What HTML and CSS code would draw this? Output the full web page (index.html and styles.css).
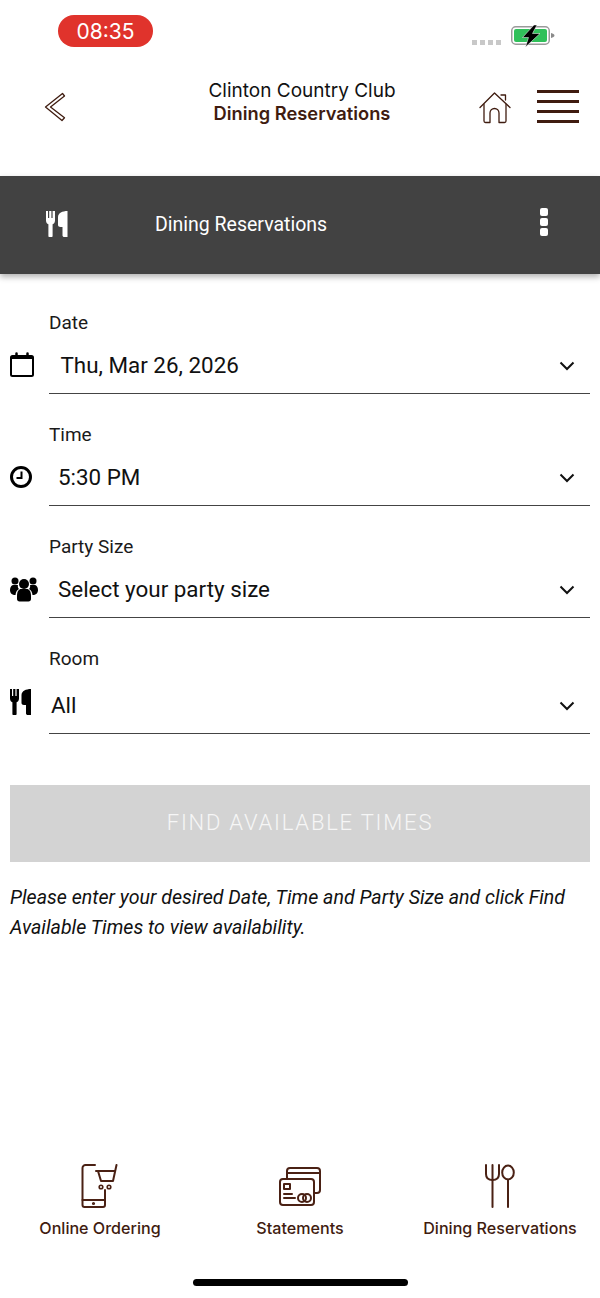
FILE: index.html
```html
<!DOCTYPE html>
<html lang="en">
<head>
<meta charset="utf-8">
<title>Dining Reservations</title>
<link rel="stylesheet" href="styles.css">
</head>
<body>
<div class="app">
  <div class="status">
    <div class="time">08:35</div>
    <div class="status-right">
      <div class="signal"><i></i><i></i><i></i><i></i></div>
      <svg class="battery" width="46" height="22" viewBox="0 0 46 22">
        <rect x="1.750" y="1.750" width="37.500" height="17.500" rx="4" fill="#fff" stroke="#9a9a9a" stroke-width="1.500"/>
        <rect x="4" y="4" width="33" height="13" rx="2" fill="#30c05a"/>
        <path d="M41 8v5c2-.5 3.500-1.500 3.500-2.500S43 8.500 41 8z" fill="#8a8a8a"/>
        <path d="M24 0 12.500 12.500h6L15.500 22 30 8.500h-7.500L27 0z" fill="#000" stroke="#fff" stroke-width=".5"/>
      </svg>
    </div>
  </div>

  <header class="header">
    <svg class="back" width="22" height="30" viewBox="0 0 22 30">
      <path d="M18.500 1.500 1.500 15l0 0 16.500 13.500 2.500-2.700L6.500 15 20.500 4z" fill="none" stroke="#3f1c10" stroke-width="1.300" stroke-linejoin="round"/>
    </svg>
    <div class="titles">
      <div class="club">Clinton Country Club</div>
      <div class="page">Dining Reservations</div>
    </div>
    <svg class="home" width="32" height="32" viewBox="0 0 32 32" fill="none" stroke="#3f1c10" stroke-width="1.300" stroke-linecap="round" stroke-linejoin="round">
      <path d="M1 15.500 15.500 1 31 15.500"/>
      <path d="M5 12.500V29a1.500 1.500 0 0 0 1.500 1.500H11V21a4.500 4.500 0 0 1 9 0v9.500h5.500A1.500 1.500 0 0 0 27 29V12.500"/>
      <path d="M22 3h4.500v5"/>
    </svg>
    <div class="burger"><i></i><i></i><i></i><i></i></div>
  </header>

  <div class="toolbar">
    <svg class="tool-icon" width="22" height="26" viewBox="0 0 22 26">
      <path d="M0 0h2v7h1.200V0h2.200v7h1.200V0H9v9.500c0 2-1 3.300-2.400 3.800V25c0 .6-.4 1-1 1H3.400c-.6 0-1-.4-1-1V13.300C1 12.800 0 11.500 0 9.500z" fill="#fff"/>
      <path d="M21.500 0v26h-3.200c-1 0-1.800-.6-1.800-1.500V16h-2c-1.500 0-2.500-.8-2.500-2V6c0-4 4.500-6 9.500-6z" fill="#fff"/>
    </svg>
    <div class="tool-title">Dining Reservations</div>
    <div class="kebab"><i></i><i></i><i></i></div>
  </div>

  <main class="form">
    <div class="field">
      <svg class="field-icon cal" width="24" height="25" viewBox="0 0 24 25" fill="none" stroke="#000" stroke-width="2">
        <rect x="1" y="4" width="22" height="20" rx="1.500"/>
        <path d="M1 5.500h22" stroke-width="3"/>
        <path d="M6.500 1.500V5M17.500 1.500V5" stroke-width="2.500" stroke-linecap="round"/>
      </svg>
      <div class="control">
        <label class="label">Date</label>
        <div class="select"><span class="value date-value">Thu, Mar 26, 2026</span>
          <svg class="chev" width="16" height="10" viewBox="0 0 16 10"><path d="M1.500 1.500 8 8l6.500-6.500" fill="none" stroke="#111" stroke-width="2"/></svg></div>
      </div>
    </div>
    <div class="field">
      <svg class="field-icon clock" width="22" height="22" viewBox="0 0 22 22" fill="none" stroke="#000">
        <circle cx="11" cy="11" r="9.500" stroke-width="3"/>
        <path d="M11.500 5.500v6.500H6.500" stroke-width="2"/>
      </svg>
      <div class="control">
        <label class="label">Time</label>
        <div class="select"><span class="value time-value">5:30 PM</span>
          <svg class="chev" width="16" height="10" viewBox="0 0 16 10"><path d="M1.500 1.500 8 8l6.500-6.500" fill="none" stroke="#111" stroke-width="2"/></svg></div>
      </div>
    </div>
    <div class="field">
      <svg class="field-icon people" width="28" height="26" viewBox="0 0 28 26" fill="#000">
        <circle cx="14" cy="8" r="5"/>
        <circle cx="5" cy="5" r="3.500"/>
        <circle cx="23" cy="5" r="3.500"/>
        <path d="M7 20c0-5 2-7 4-7h6c2 0 4 2 4 7v3c0 1.500-1 2.500-2.500 2.500h-9C8 25.500 7 24.500 7 23z"/>
        <path d="M0 14c0-3 1.500-5 3.500-5H8c-.5 1.500 0 3 1 4-2 1-3.200 3-3.500 6C2 19 0 17 0 14z"/>
        <path d="M28 14c0-3-1.500-5-3.500-5H20c.5 1.500 0 3-1 4 2 1 3.200 3 3.500 6 3.500 0 5.500-2 5.500-5z"/>
      </svg>
      <div class="control">
        <label class="label">Party Size</label>
        <div class="select"><span class="value party-value">Select your party size</span>
          <svg class="chev" width="16" height="10" viewBox="0 0 16 10"><path d="M1.500 1.500 8 8l6.500-6.500" fill="none" stroke="#111" stroke-width="2"/></svg></div>
      </div>
    </div>
    <div class="field room">
      <svg class="field-icon utensils" width="21" height="26" viewBox="0 0 21 26" fill="#000">
        <path d="M0 0h2v7h1.200V0h2.200v7h1.200V0H9v9.500c0 2-1 3.300-2.400 3.800V25c0 .6-.4 1-1 1H3.400c-.6 0-1-.4-1-1V13.300C1 12.800 0 11.500 0 9.500z"/>
        <path d="M21 0v26h-3.200c-1 0-1.800-.6-1.800-1.500V16h-2c-1.500 0-2.500-.8-2.500-2V6c0-4 4.500-6 9.500-6z"/>
      </svg>
      <div class="control">
        <label class="label">Room</label>
        <div class="select"><span class="value room-value">All</span>
          <svg class="chev" width="16" height="10" viewBox="0 0 16 10"><path d="M1.500 1.500 8 8l6.500-6.500" fill="none" stroke="#111" stroke-width="2"/></svg></div>
      </div>
    </div>

    <button class="find" type="button">FIND AVAILABLE TIMES</button>
    <p class="hint">Please enter your desired Date, Time and Party Size and click Find Available Times to view availability.</p>
  </main>

  <nav class="nav">
    <div class="nav-item">
      <svg class="nav-icon" width="38" height="44" viewBox="0 0 38 44" fill="none" stroke="#4a2114" stroke-width="2" stroke-linecap="round" stroke-linejoin="round">
        <path d="M14 1H4.500A3 3 0 0 0 1.500 4v37a2 2 0 0 0 2 2H22a2 2 0 0 0 2-2V26"/>
        <path d="M1.500 36H24"/>
        <circle cx="12.500" cy="39.500" r=".6" fill="#4a2114"/>
        <path d="M15 7h19M17 7l3 10h12l3.500-16"/>
        <circle cx="20" cy="23" r="1.800" stroke-width="1.600"/>
        <circle cx="28" cy="23" r="1.800" stroke-width="1.600"/>
      </svg>
      <div class="nav-label">Online Ordering</div>
    </div>
    <div class="nav-item">
      <svg class="nav-icon" width="44" height="44" viewBox="0 0 44 44" fill="none" stroke="#4a2114" stroke-width="2" stroke-linecap="round" stroke-linejoin="round">
        <path d="M9 15V7a3 3 0 0 1 3-3h27a3 3 0 0 1 3 3v19a3 3 0 0 1-3 3h-2"/>
        <path d="M9 9h33"/>
        <rect x="2" y="15" width="34" height="26" rx="3"/>
        <rect x="6" y="20" width="6" height="5"/>
        <path d="M6 30h8M6 34h11"/>
        <circle cx="24" cy="34" r="4"/>
        <circle cx="29" cy="34" r="4"/>
      </svg>
      <div class="nav-label">Statements</div>
    </div>
    <div class="nav-item">
      <svg class="nav-icon" width="30" height="44" viewBox="0 0 30 44" fill="none" stroke="#4a2114" stroke-width="2" stroke-linecap="round" stroke-linejoin="round">
        <path d="M1 1v9c0 4 2.500 6 6.500 6s6.500-2 6.500-6V1"/>
        <path d="M7.500 1v42"/>
        <ellipse cx="23" cy="8.500" rx="5.800" ry="7"/>
        <path d="M23 15.500V43"/>
      </svg>
      <div class="nav-label">Dining Reservations</div>
    </div>
  </nav>
  <div class="indicator-wrap"><div class="indicator"></div></div>
</div>
</body>
</html>
```

FILE: styles.css
```css
* { box-sizing: border-box; }
html, body { margin: 0; padding: 0; background: #fff; }
body { font-family: Roboto, "Liberation Sans", sans-serif; color: #111; }
.app { width: 600px; height: 1298px; display: flex; flex-direction: column; overflow: hidden; }

.status { height: 66px; display: flex; justify-content: space-between; padding: 15px 44px 0 58px; flex: none; }
.time { width: 95px; height: 32px; border-radius: 16px; background: #e0332c; color: #fff; font: 400 21px/33px Inter, sans-serif; text-align: center; }
.status-right { display: flex; align-items: flex-start; gap: 9px; padding-top: 10px; }
.signal { display: flex; gap: 3px; margin-top: 15px; }
.signal i { width: 5px; height: 5px; background: #c8c8c8; display: block; }
.battery { display: block; }

.header { height: 110px; flex: none; display: flex; align-items: flex-start; padding: 26px 21px 0 44px; }
.back { flex: none; }
.titles { width: 318px; margin-left: 77px; text-align: center; flex: none; }
.club { font: 400 19px/23px Inter, sans-serif; color: #111; margin-top: -13px; }
.page { font: 600 18.300px/23px Inter, sans-serif; color: #3f1c10; }
.home { margin-left: 18px; flex: none; }
.burger { margin-left: 26px; width: 42px; flex: none; display: flex; flex-direction: column; gap: 7px; margin-top: -2px; }
.burger i { display: block; height: 3px; background: #3f1c10; }

.toolbar { height: 98px; flex: none; background: #424242; box-shadow: 0 3px 6px rgba(0,0,0,.3); display: flex; align-items: center; padding: 0 52px 0 46px; color: #fff; }
.tool-icon { margin-top: -2px; flex: none; }
.tool-title { font-size: 19.500px; margin-left: 87px; margin-top: -1px; flex: 1; }
.kebab { display: flex; flex-direction: column; gap: 2px; margin-top: -6px; }
.kebab i { display: block; width: 8px; height: 8px; border-radius: 2px; background: #fff; }

.form { flex: 1; padding: 37px 10px 0; display: flex; flex-direction: column; }
.field { display: flex; align-items: flex-end; height: 112px; }
.field:first-child { height: 83px; }
.field.room { height: 116px; }
.field-icon { flex: none; }
.cal { margin-bottom: 17px; }
.clock { margin-right: 2px; margin-bottom: 18px; }
.people { margin-right: -4px; margin-bottom: 16px; }
.utensils { margin-bottom: 19px; }
.control { margin-left: 15px; flex: 1; border-bottom: 1px solid #444; }
.room .control { margin-left: 18px; }
.label { display: block; font-size: 19px; line-height: 22px; color: #1a1a1a; margin-bottom: 5px; }
.room .label { margin-bottom: 9px; }
.select { display: flex; justify-content: space-between; align-items: center; height: 54px; padding-right: 15px; }
.value { font-size: 22.400px; color: #111; padding-bottom: 2px; }
.date-value { margin-left: 11.500px; }
.time-value { margin-left: 9px; }
.party-value { margin-left: 9px; }
.room-value { margin-left: 2px; }

.find { margin-top: 51px; height: 77px; width: 580px; border: 0; background: #d3d3d3; color: #f6f6f6; font: 300 22px Roboto, sans-serif; letter-spacing: 1.800px; padding: 0 0 2px; flex: none; }
.hint { margin: 21px 0 0; font-size: 19.600px; line-height: 30px; font-style: italic; color: #111; }

.nav { height: 100px; flex: none; display: grid; grid-template-columns: repeat(3, 200px); }
.nav-item { display: flex; flex-direction: column; align-items: center; }
.nav-icon { height: 44px; display: block; }
.nav-label { margin-top: 9px; font: 500 16.100px/22px Inter, sans-serif; color: #3f1c10; white-space: nowrap; }
.indicator-wrap { height: 34px; flex: none; display: flex; justify-content: center; padding-top: 15px; }
.indicator { width: 215px; height: 7px; border-radius: 4px; background: #000; }
```
